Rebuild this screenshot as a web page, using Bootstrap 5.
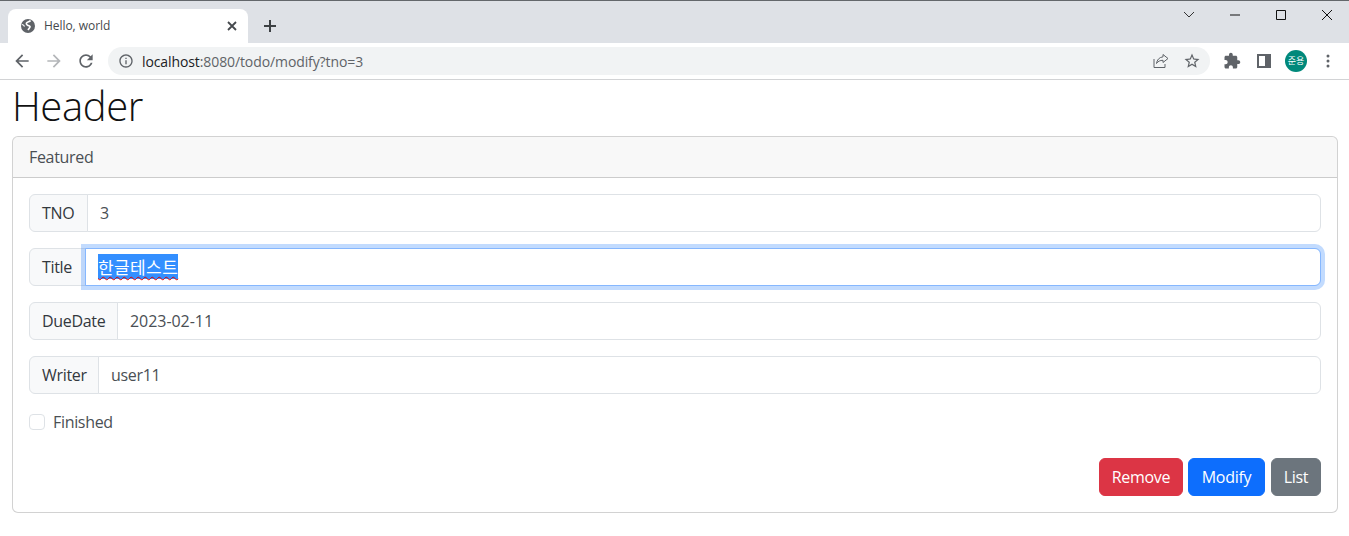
<!doctype html>
<html lang="en">
<head>
<meta charset="utf-8">
<title>Hello, world</title>
<link href="https://cdn.jsdelivr.net/npm/bootstrap@5.3.0/dist/css/bootstrap.min.css" rel="stylesheet">
<style>
html,body{height:536px;overflow:hidden}
body{font-family:"Open Sans","Noto Sans CJK KR",sans-serif;background:#fff;color:#212529}
.chrome-top{height:43px;background:#dee1e6;border-top:1px solid #63676b}
.chrome-tab{width:240px;height:34px;margin-left:8px;margin-top:8px;background:#fff;border-radius:8px 8px 0 0;padding:0 11px 0 13px;font-size:12px;color:#45494d}
.chrome-tab svg{flex:none}
.tab-name{margin-left:9px;flex:1;letter-spacing:-.05px}
.new-tab{margin-left:16px;margin-top:8px;width:12px;height:34px}
.win-ctrls{margin-left:auto;height:27px}
.win-ctrl{width:46px;height:27px;padding-left:2px}
.chrome-bar{height:37px;background:#fff;border-bottom:1px solid #d2d3d5;padding:4px 0 4px 12px}
.bar-btn{width:20px;height:28px;margin-right:12px}
.omni{width:1102px;height:28px;background:#f1f3f4;border-radius:14px;padding:0 9px 0 10px;font-size:14px;color:#5f6368;letter-spacing:-.1px}
.omni b{font-weight:400;color:#202124}
.omni-url{margin-left:8px;flex:1}
.omni svg+svg{margin-left:14px}
.tool-gap{margin-left:12px;width:20px}
.avatar{width:22px;height:22px;border-radius:50%;background:#00897b;color:#fff;font-size:9px;font-family:"Noto Sans CJK KR",sans-serif}
.page-wrap{padding:0 11px 0 12px}
.page-title{font-size:40px;font-weight:300;line-height:45px;padding-top:3px;margin:0 0 8px;letter-spacing:-.4px;color:#111}
.page-card{height:377px}
.page-card .card-header{height:41px;padding:8px 16px}
.page-card,.page-card .form-control,.page-card .input-group-text,.page-card .form-check-label{font-size:16px;font-weight:400;letter-spacing:-.32px}
.page-card .card-header,.page-card .form-control,.page-card .form-check-label{color:#4a4f54}
.page-card .form-control,.page-card .input-group-text{height:38px}
.page-card .input-group-text{color:#33383d}
.page-card .date-field{letter-spacing:-.05px}
.addon-tno{width:59px}
.addon-title{width:57px}
.addon-date{width:89px}
.addon-writer{width:70px}
.sel-text{background:#338fff;color:#fff;font-family:"Noto Sans CJK KR",sans-serif;font-weight:400;font-size:17px;letter-spacing:.4px;text-decoration:underline wavy #e00000 1.2px;text-underline-offset:2px}
.focus-box{border-color:#86b7fe!important;box-shadow:0 0 0 .25rem rgba(13,110,253,.25);z-index:3;position:relative;padding-top:5px}
.page-card .btn{font-size:16px;font-weight:400;height:38px;letter-spacing:-.3px;padding-left:0;padding-right:0}
.btn-remove{width:84px}
.btn-modify{width:77px;margin-left:5px}
.btn-list{width:50px;margin-left:6px}
.form-check-input{margin-top:.25rem}
.check-row{height:20px;margin-bottom:24px}
</style>
</head>
<body>
<div class="chrome-top d-flex align-items-start">
  <div class="chrome-tab d-flex align-items-center">
    <svg width="14" height="14" viewBox="1 1 14 14"><circle cx="8" cy="8" r="7" fill="#5f6368"/><path d="M10.5 2.500c-1 1.500-3 1-4 2.500s1.500 2.500 3 3-.5 2.500-1.500 4" fill="none" stroke="#fff" stroke-width="1.600"/><path d="M2 6.500c1 .2 2 .8 2.500 2" fill="none" stroke="#fff" stroke-width="1.200"/></svg>
    <span class="tab-name">Hello, world</span>
    <svg width="10" height="10" viewBox="0 0 10 10" stroke="#45494d" stroke-width="1.8"><path d="M1 1l8 8M9 1l-8 8"/></svg>
  </div>
  <div class="new-tab d-flex align-items-center justify-content-center">
    <svg width="12" height="12" viewBox="0 0 12 12" stroke="#3c4043" stroke-width="2"><path d="M6 0v12M0 6h12"/></svg>
  </div>
  <div class="win-ctrls d-flex">
    <div class="win-ctrl d-flex align-items-center justify-content-center"><svg width="12" height="8" viewBox="0 0 12 8" fill="none" stroke="#333" stroke-width="1"><path d="M1 1l5 5 5-5"/></svg></div>
    <div class="win-ctrl d-flex align-items-center justify-content-center"><svg width="10" height="2" viewBox="0 0 10 2" stroke="#111" stroke-width="1"><path d="M0 1h10"/></svg></div>
    <div class="win-ctrl d-flex align-items-center justify-content-center"><svg width="10" height="10" viewBox="0 0 10 10" fill="none" stroke="#111" stroke-width="1"><path d="M.5.5h9v9h-9z"/></svg></div>
    <div class="win-ctrl d-flex align-items-center justify-content-center"><svg width="10" height="10" viewBox="0 0 10 10" stroke="#111" stroke-width="1"><path d="M0 0l10 10M10 0L0 10"/></svg></div>
  </div>
</div>
<div class="chrome-bar d-flex align-items-center">
  <div class="bar-btn d-flex align-items-center justify-content-center"><svg width="20" height="20" viewBox="0 0 24 24" fill="#5f6368"><path d="M20 11H7.83l5.59-5.59L12 4l-8 8 8 8 1.41-1.41L7.83 13H20v-2z"/></svg></div>
  <div class="bar-btn d-flex align-items-center justify-content-center"><svg width="20" height="20" viewBox="0 0 24 24" fill="#b4b6b9"><path d="M4 11h12.17l-5.59-5.59L12 4l8 8-8 8-1.41-1.41L16.17 13H4v-2z"/></svg></div>
  <div class="bar-btn d-flex align-items-center justify-content-center"><svg width="20" height="20" viewBox="0 0 24 24" fill="#5f6368"><path d="M17.65 6.35C16.2 4.9 14.21 4 12 4c-4.42 0-7.99 3.58-7.99 8s3.57 8 7.99 8c3.73 0 6.84-2.55 7.73-6h-2.08c-.82 2.33-3.04 4-5.65 4-3.31 0-6-2.69-6-6s2.69-6 6-6c1.66 0 3.14.69 4.22 1.78L13 11h7V4l-2.35 2.35z"/></svg></div>
  <div class="omni d-flex align-items-center">
    <svg width="16" height="16" viewBox="0 0 24 24" fill="#5f6368"><path d="M11 7h2v2h-2zm0 4h2v6h-2zm1-9C6.48 2 2 6.48 2 12s4.48 10 10 10 10-4.48 10-10S17.52 2 12 2zm0 18c-4.41 0-8-3.59-8-8s3.59-8 8-8 8 3.59 8 8-3.59 8-8 8z"/></svg>
    <span class="omni-url"><b>localhost</b>:8080/todo/modify?tno=3</span>
    <svg width="16" height="16" viewBox="0 0 16 16" fill="none" stroke="#5f6368" stroke-width="1"><path d="M10 1.500l5 4-5 4V7.300c-3 0-5 1-6.500 3.200C4 7 6 4.300 10 3.800zM1 6v8.500h11V11"/></svg>
    <svg width="18" height="18" viewBox="0 0 24 24" fill="#5f6368"><path d="M22 9.24l-7.190-.62L12 2 9.190 8.630 2 9.240l5.460 4.730L5.820 21 12 17.270 18.180 21l-1.630-7.030L22 9.240zM12 15.400l-3.760 2.270 1-4.280-3.320-2.880 4.380-.38L12 6.100l1.710 4.040 4.380.38-3.320 2.880 1 4.280L12 15.400z"/></svg>
  </div>
  <div class="tool-gap d-flex justify-content-center"><svg width="18" height="18" viewBox="0 0 24 24" fill="#5f6368"><path d="M20.500 11H19V7c0-1.100-.9-2-2-2h-4V3.500C13 2.120 11.880 1 10.500 1S8 2.120 8 3.500V5H4c-1.100 0-1.990.9-1.990 2v3.800H3.500c1.490 0 2.700 1.210 2.700 2.700s-1.210 2.700-2.700 2.700H2V20c0 1.100.9 2 2 2h3.800v-1.500c0-1.490 1.210-2.700 2.700-2.700 1.490 0 2.700 1.210 2.700 2.700V22H17c1.100 0 2-.9 2-2v-4h1.500c1.380 0 2.500-1.120 2.500-2.500S21.880 11 20.500 11z"/></svg></div>
  <div class="tool-gap d-flex justify-content-center"><svg width="14" height="14" viewBox="0 0 14 14"><path d="M0 0h14v14H0z" fill="#5f6368"/><path d="M2 2h6v10H2z" fill="#fff"/></svg></div>
  <div class="tool-gap d-flex justify-content-center"><div class="avatar d-flex align-items-center justify-content-center flex-shrink-0">준용</div></div>
  <div class="tool-gap d-flex justify-content-center"><svg width="4" height="14" viewBox="0 0 4 14" fill="#5f6368"><circle cx="2" cy="2" r="1.500"/><circle cx="2" cy="7" r="1.500"/><circle cx="2" cy="12" r="1.500"/></svg></div>
</div>

<div class="page-wrap">
  <h1 class="page-title">Header</h1>
  <div class="card page-card">
    <div class="card-header">Featured</div>
    <div class="card-body">
      <div class="input-group mb-3"><span class="input-group-text addon-tno">TNO</span><input type="text" class="form-control" value="3" readonly></div>
      <div class="input-group mb-3"><span class="input-group-text addon-title">Title</span><div class="form-control focus-box"><span class="sel-text">한글테스트</span></div></div>
      <div class="input-group mb-3"><span class="input-group-text addon-date">DueDate</span><input type="text" class="form-control date-field" value="2023-02-11" readonly></div>
      <div class="input-group mb-3"><span class="input-group-text addon-writer">Writer</span><input type="text" class="form-control" value="user11" readonly></div>
      <div class="form-check check-row"><input class="form-check-input" type="checkbox" id="fin"><label class="form-check-label" for="fin">Finished</label></div>
      <div class="d-flex justify-content-end">
        <button type="button" class="btn btn-danger btn-remove">Remove</button>
        <button type="button" class="btn btn-primary btn-modify">Modify</button>
        <button type="button" class="btn btn-secondary btn-list">List</button>
      </div>
    </div>
  </div>
</div>
</body>
</html>
